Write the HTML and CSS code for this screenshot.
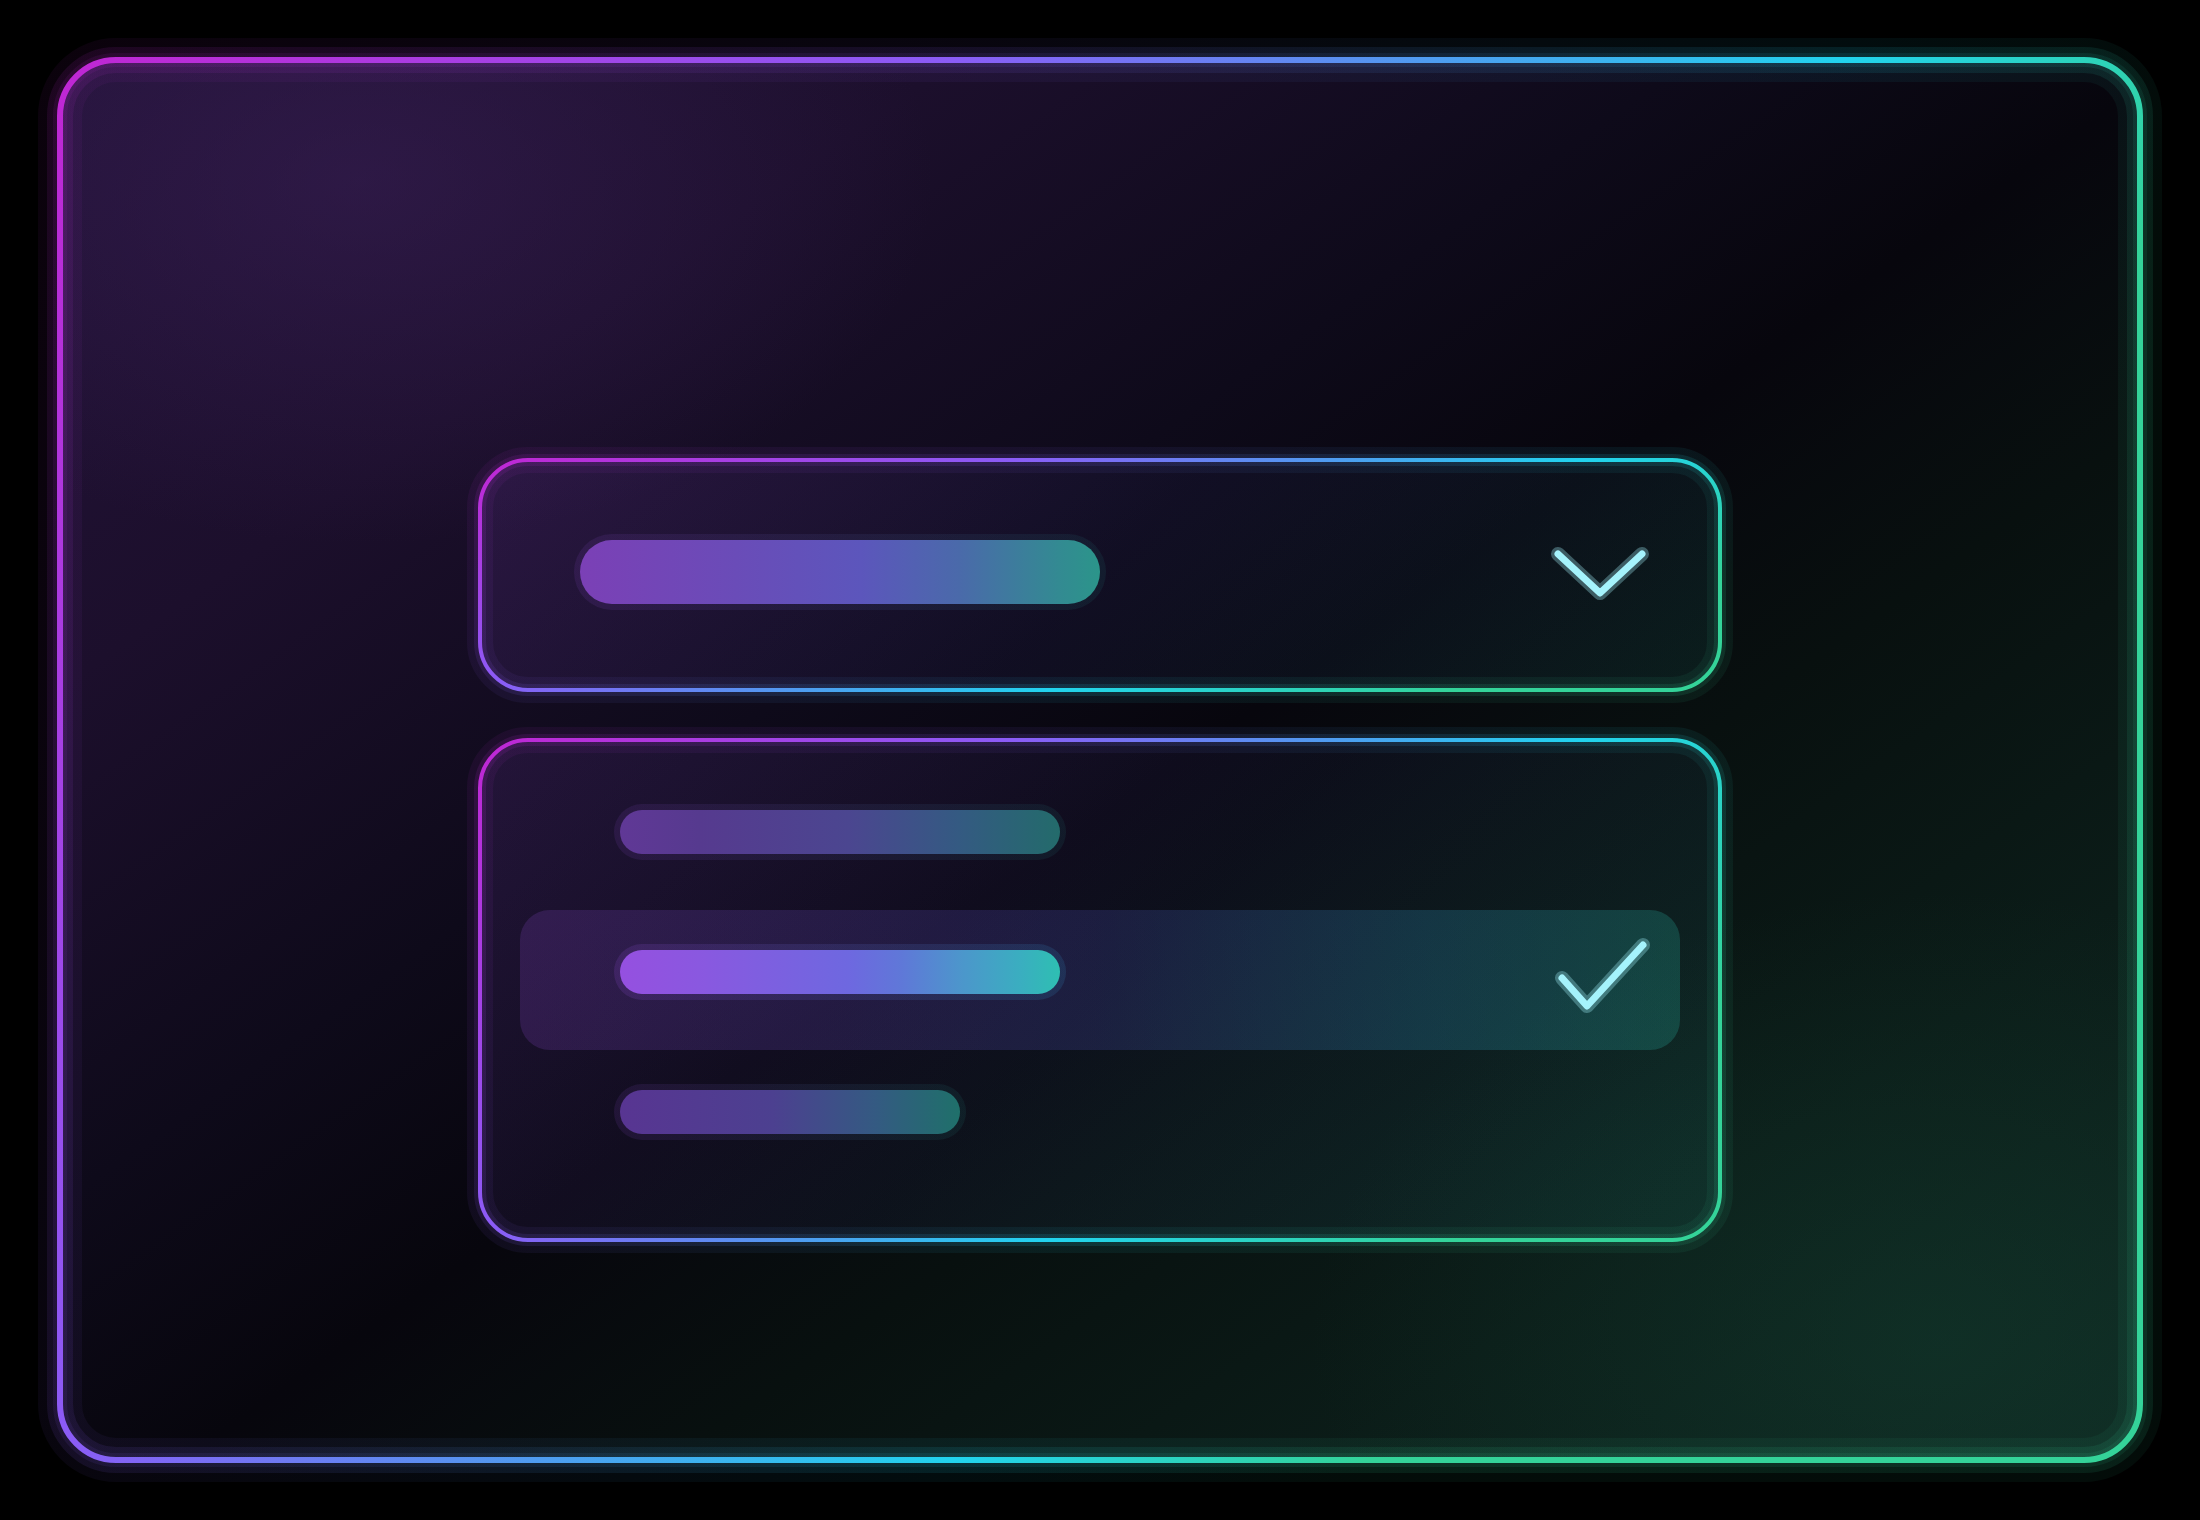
FILE: index.html
```html
<!DOCTYPE html>
<html lang="en">
<head>
    <meta charset="UTF-8">
    <meta name="viewport" content="width=device-width, initial-scale=1.0">
    <title>Select</title>
    <link rel="stylesheet" href="styles.css">
</head>
<body>

    <!-- Outer glass frame -->
    <div class="frame">
        <svg class="outline" viewBox="0 0 2140 1460" xmlns="http://www.w3.org/2000/svg">
            <defs>
                <linearGradient id="frame-edge" gradientUnits="userSpaceOnUse" x1="30" y1="30" x2="2144" y2="1376">
                    <stop offset="0" stop-color="#c026d3"/>
                    <stop offset="0.3" stop-color="#8b5cf6"/>
                    <stop offset="0.46" stop-color="#4f9cf0"/>
                    <stop offset="0.6" stop-color="#22d3ee"/>
                    <stop offset="0.74" stop-color="#34d399"/>
                    <stop offset="1" stop-color="#34d399"/>
                </linearGradient>
            </defs>
            <g fill="none" stroke="url(#frame-edge)">
                <rect x="30" y="30" width="2080" height="1400" rx="56" stroke-width="44" stroke-opacity=".06"/>
                <rect x="30" y="30" width="2080" height="1400" rx="56" stroke-width="26" stroke-opacity=".1"/>
                <rect x="30" y="30" width="2080" height="1400" rx="56" stroke-width="14" stroke-opacity=".09"/>
                <rect x="30" y="30" width="2080" height="1400" rx="56" stroke-width="6"/>
            </g>
        </svg>

        <!-- Closed select -->
        <div class="select">
            <svg class="outline" viewBox="0 0 1272 262" xmlns="http://www.w3.org/2000/svg">
                <defs>
                    <linearGradient id="select-edge" gradientUnits="userSpaceOnUse" x1="16" y1="16" x2="295" y2="662">
                        <stop offset="0" stop-color="#c026d3"/>
                        <stop offset="0.3" stop-color="#8b5cf6"/>
                        <stop offset="0.48" stop-color="#4f9cf0"/>
                        <stop offset="0.62" stop-color="#22d3ee"/>
                        <stop offset="0.85" stop-color="#34d399"/>
                    </linearGradient>
                </defs>
                <g fill="none" stroke="url(#select-edge)">
                    <rect x="16" y="16" width="1240" height="230" rx="48" stroke-width="26" stroke-opacity=".07"/>
                    <rect x="16" y="16" width="1240" height="230" rx="48" stroke-width="12" stroke-opacity=".12"/>
                    <rect x="16" y="16" width="1240" height="230" rx="48" stroke-width="4"/>
                </g>
            </svg>
            <span class="track"><span class="bar bar-value"></span></span>
            <svg class="chevron" viewBox="0 0 100 60" xmlns="http://www.w3.org/2000/svg">
                <polyline class="mark-glow" points="8,12 50,51 92,12"/>
                <polyline class="mark" points="8,12 50,51 92,12"/>
            </svg>
        </div>

        <!-- Open option list -->
        <div class="options" role="listbox">
            <svg class="outline" viewBox="0 0 1272 532" xmlns="http://www.w3.org/2000/svg">
                <defs>
                    <linearGradient id="list-edge" gradientUnits="userSpaceOnUse" x1="16" y1="16" x2="848" y2="900">
                        <stop offset="0" stop-color="#c026d3"/>
                        <stop offset="0.3" stop-color="#8b5cf6"/>
                        <stop offset="0.48" stop-color="#4f9cf0"/>
                        <stop offset="0.62" stop-color="#22d3ee"/>
                        <stop offset="0.85" stop-color="#34d399"/>
                    </linearGradient>
                </defs>
                <g fill="none" stroke="url(#list-edge)">
                    <rect x="16" y="16" width="1240" height="500" rx="48" stroke-width="26" stroke-opacity=".07"/>
                    <rect x="16" y="16" width="1240" height="500" rx="48" stroke-width="12" stroke-opacity=".12"/>
                    <rect x="16" y="16" width="1240" height="500" rx="48" stroke-width="4"/>
                </g>
            </svg>

            <div class="option" role="option">
                <span class="track"><span class="bar bar-dim"></span></span>
            </div>

            <div class="option is-selected" role="option" aria-selected="true">
                <span class="track"><span class="bar bar-active"></span></span>
                <svg class="check" viewBox="0 0 100 80" xmlns="http://www.w3.org/2000/svg">
                    <polyline class="mark-glow" points="10,43 35,71 91,10"/>
                    <polyline class="mark" points="10,43 35,71 91,10"/>
                </svg>
            </div>

            <div class="option option-last" role="option">
                <span class="track"><span class="bar bar-dim bar-short"></span></span>
            </div>
        </div>
    </div>

</body>
</html>
```

FILE: styles.css
```css
/* General styles */
body {
    margin: 0;
    padding: 0;
    background-color: #000;
    font-family: "Inter", "Noto Sans", sans-serif;
}

/* Frame */
.frame {
    position: relative;
    height: 1400px;
    margin: 60px;
    padding-top: 400px;
    box-sizing: border-box;
    border-radius: 56px;
    display: flex;
    flex-direction: column;
    align-items: center;
    background:
        radial-gradient(ellipse 820px 520px at 300px 120px, rgba(62, 34, 92, 0.45), transparent 70%),
        radial-gradient(ellipse 900px 640px at 1880px 1280px, rgba(22, 70, 54, 0.35), transparent 70%),
        linear-gradient(145deg, #24133a 0%, #1c0f2c 22%, #0e0a1a 40%, #07060d 52%, #08100f 64%, #0b1c18 80%, #0e2821 100%);
}

.outline {
    position: absolute;
    pointer-events: none;
    overflow: visible;
}

.frame > .outline {
    left: -30px;
    top: -30px;
    width: calc(100% + 60px);
    height: calc(100% + 60px);
}

.select > .outline,
.options > .outline {
    left: -16px;
    top: -16px;
    width: calc(100% + 32px);
    height: calc(100% + 32px);
}

/* Boxes */
.select,
.options {
    position: relative;
    width: 1240px;
    box-sizing: border-box;
    border-radius: 48px;
    background: linear-gradient(135deg, rgba(168, 85, 247, 0.12) 0%, rgba(99, 102, 241, 0.06) 50%, rgba(45, 212, 191, 0.08) 100%);
}

.select {
    height: 230px;
    display: flex;
    align-items: center;
    padding: 0 70px 6px 94px;
}

.options {
    height: 500px;
    margin-top: 50px;
    display: flex;
    flex-direction: column;
    padding: 64px 40px 0;
}

/* Pills */
.track {
    display: block;
    flex: none;
    padding: 6px;
    border-radius: 999px;
    background: linear-gradient(90deg, rgba(168, 85, 247, 0.1), rgba(45, 212, 191, 0.07));
}

.bar {
    display: block;
    width: 440px;
    height: 44px;
    border-radius: 999px;
}

.bar-value {
    width: 520px;
    height: 64px;
    background: linear-gradient(90deg, #7b40b6 0%, #6a4cb8 30%, #5c56bc 54%, #4a6aaa 73%, #338a92 92%, #2b958a 100%);
}

.bar-dim {
    background: linear-gradient(90deg, #603896 0%, #563a8f 18%, #4b4690 52%, #345a82 77%, #236b6b 100%);
}

.bar-short {
    width: 340px;
    background: linear-gradient(90deg, #583592 0%, #4c4090 45%, #345a82 75%, #1f706a 100%);
}

.bar-active {
    background: linear-gradient(90deg, #9550e0 0%, #8a58e0 18%, #6e68e0 52%, #5f78d8 64%, #4d95cc 77%, #3aaec0 91%, #2ebfb2 100%);
}

/* Rows */
.option {
    display: flex;
    align-items: flex-start;
    padding-left: 94px;
}

.option.is-selected {
    height: 140px;
    margin-top: 50px;
    box-sizing: border-box;
    padding: 34px 28px 0 94px;
    border-radius: 30px;
    background: linear-gradient(90deg, rgba(168, 85, 247, 0.16) 0%, rgba(99, 102, 241, 0.17) 50%, rgba(56, 189, 248, 0.18) 78%, rgba(45, 212, 191, 0.2) 100%);
}

.option.is-selected .track {
    background: linear-gradient(90deg, rgba(168, 85, 247, 0.14), rgba(56, 189, 248, 0.12));
}

.option-last {
    margin-top: 34px;
}

/* Chevron and check marks */
.chevron {
    width: 100px;
    height: 60px;
    margin-left: auto;
}

.check {
    width: 100px;
    height: 80px;
    margin-left: auto;
    margin-top: -9px;
}

.mark-glow,
.mark {
    fill: none;
    stroke-linecap: round;
    stroke-linejoin: round;
}

.mark-glow {
    stroke: rgba(165, 243, 252, 0.32);
    stroke-width: 14;
}

.mark {
    stroke: #a5f3fc;
    stroke-width: 7;
}
```
